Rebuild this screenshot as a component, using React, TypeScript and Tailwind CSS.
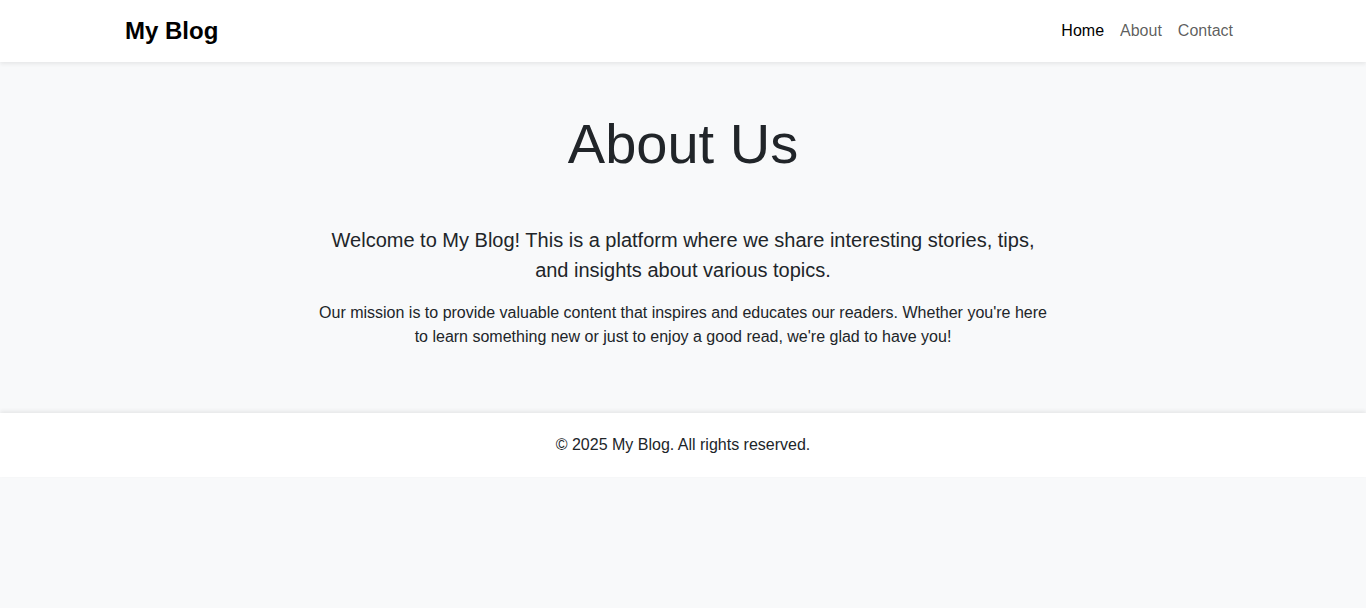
export default function App() {
  return (
    <div className="min-h-screen bg-[#f8f9fa] font-['Liberation_Sans',Arial,sans-serif] text-[#212529]">
      {/* Navbar */}
      <nav className="relative z-10 h-[62px] bg-white shadow-[0_2px_4px_rgba(0,0,0,0.075)]">
        <div className="mx-auto flex h-full max-w-[1140px] items-center justify-between px-3">
          <a href="#" className="text-[24px] font-bold leading-none text-black">
            My Blog
          </a>
          <ul className="flex items-center text-[16px] leading-6">
            <li>
              <a href="#" className="block px-2 text-black">
                Home
              </a>
            </li>
            <li>
              <a href="#" className="block px-2 text-black/65">
                About
              </a>
            </li>
            <li>
              <a href="#" className="block px-2 text-black/65">
                Contact
              </a>
            </li>
          </ul>
        </div>
      </nav>

      {/* Main */}
      <main className="py-12">
        <div className="mx-auto max-w-[1140px] px-3 text-center">
          <h1 className="mb-12 text-[56px] leading-[1.2] font-normal">About Us</h1>
          <div className="mx-auto w-[760px] px-3">
            <p className="mb-4 text-[20px] leading-[30px]">
              Welcome to My Blog! This is a platform where we share interesting stories, tips,
              and insights about various topics.
            </p>
            <p className="mb-4 text-[16px] leading-6">
              Our mission is to provide valuable content that inspires and educates our readers.
              Whether you're here to learn something new or just to enjoy a good read, we're glad
              to have you!
            </p>
          </div>
        </div>
      </main>

      {/* Footer */}
      <footer className="relative bg-white py-5 text-center shadow-[0_-2px_4px_rgba(0,0,0,0.075)]">
        <p className="text-[16px] leading-6">© 2025 My Blog. All rights reserved.</p>
      </footer>
    </div>
  );
}
